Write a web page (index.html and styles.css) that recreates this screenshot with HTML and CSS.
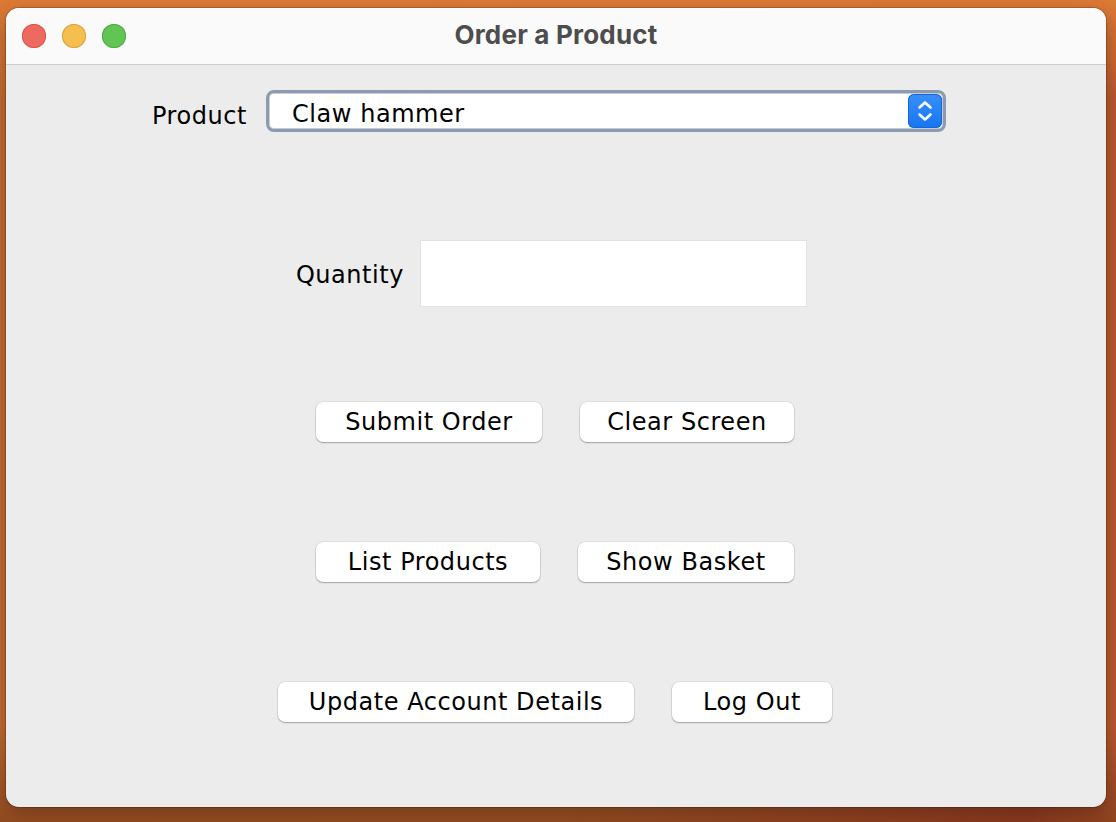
FILE: index.html
```html
<!DOCTYPE html>
<html>
<head>
<meta charset="utf-8">
<title>Order a Product</title>
<link rel="stylesheet" href="styles.css">
</head>
<body>
<div class="desktop">
  <div class="window">
    <div class="titlebar">
      <div class="lights">
        <span class="light red"></span>
        <span class="light yellow"></span>
        <span class="light green"></span>
      </div>
      <div class="title">Order a Product</div>
    </div>
    <div class="content">
      <div class="row row-product">
        <label class="label label-product">Product</label>
        <div class="combo">
          <span class="combo-text">Claw hammer</span>
          <span class="stepper">
            <svg width="20" height="26" viewBox="0 0 20 26">
              <path d="M4.5 9.5 L10 4.5 L15.5 9.5" fill="none" stroke="#fff" stroke-width="2.6" stroke-linecap="round" stroke-linejoin="round"/>
              <path d="M4.5 16.5 L10 21.5 L15.5 16.5" fill="none" stroke="#fff" stroke-width="2.6" stroke-linecap="round" stroke-linejoin="round"/>
            </svg>
          </span>
        </div>
      </div>
      <div class="row row-qty">
        <label class="label label-qty">Quantity</label>
        <div class="field"></div>
      </div>
      <div class="row row-b1">
        <button class="btn w226">Submit Order</button>
        <button class="btn w214">Clear Screen</button>
      </div>
      <div class="row row-b2">
        <button class="btn w224">List Products</button>
        <button class="btn w216">Show Basket</button>
      </div>
      <div class="row row-b3">
        <button class="btn w356">Update Account Details</button>
        <button class="btn w160">Log Out</button>
      </div>
    </div>
  </div>
</div>
</body>
</html>
```
FILE: styles.css
```css
* { box-sizing: border-box; }
html, body { margin: 0; padding: 0; }
body {
  width: 1116px;
  height: 822px;
  overflow: hidden;
  font-family: "DejaVu Sans", "Liberation Sans", sans-serif;
}
.desktop {
  width: 1116px;
  height: 822px;
  padding: 8px 0 0 6px;
  background:
    linear-gradient(180deg, #dc7a36 0%, rgba(220,122,54,0) 12%),
    linear-gradient(180deg, rgba(0,0,0,0) 88%, rgba(110,50,20,0.55) 100%),
    linear-gradient(90deg, #c06a30 0%, #bd6a32 50%, #a8402b 92%, #b85a2e 100%);
}
.window {
  width: 1100px;
  height: 799px;
  border-radius: 13px;
  overflow: hidden;
  background: #ececec;
  box-shadow: 0 0 0 1px rgba(0,0,0,0.18), 0 6px 18px rgba(0,0,0,0.25);
  display: flex;
  flex-direction: column;
}
.titlebar {
  height: 57px;
  flex: none;
  background: #fafafa;
  border-bottom: 1px solid #cfcfcf;
  display: flex;
  align-items: center;
  position: relative;
}
.lights {
  display: flex;
  gap: 16px;
  padding-left: 16px;
  margin-bottom: 1px;
}
.light {
  width: 24px;
  height: 24px;
  border-radius: 50%;
  display: block;
}
.red { background: #ee6a5f; box-shadow: inset 0 0 0 1px #d8564c; }
.yellow { background: #f5bf4f; box-shadow: inset 0 0 0 1px #d9a441; }
.green { background: #61c554; box-shadow: inset 0 0 0 1px #50a944; }
.title {
  position: absolute;
  left: 0;
  right: 0;
  top: 0;
  bottom: 0;
  display: flex;
  align-items: center;
  justify-content: center;
  font-family: Inter, "Liberation Sans", sans-serif;
  font-weight: 700;
  font-size: 26px;
  letter-spacing: 0.2px;
  color: #4d4d4d;
  padding-left: 0;
  padding-bottom: 3px;
}
.content {
  flex: 1;
  display: flex;
  flex-direction: column;
  padding-top: 25px;
  font-size: 24px;
  letter-spacing: 0.55px;
  color: #000;
}
.row {
  display: flex;
  align-items: center;
}
.label {
  text-align: right;
  white-space: nowrap;
}
.row-product { padding-left: 130px; gap: 19px; }
.label-product { width: 111px; padding-top: 9px; }
.combo {
  width: 680px;
  height: 42px;
  border-radius: 8px;
  background: #fff;
  border: 3px solid #8c9bb0;
  display: flex;
  align-items: center;
  justify-content: space-between;
  padding: 0 0 0 23px;
  box-shadow: inset 0 0 0 1px #c4ccd8;
}
.combo-text { padding-top: 5px; }
.stepper {
  width: 34px;
  height: 34px;
  margin-right: 1px;
  border-radius: 6px;
  background: linear-gradient(180deg, #3a8ff8 0%, #1476f5 100%);
  box-shadow: inset 0 0 0 1px #1a66d0;
  display: flex;
  align-items: center;
  justify-content: center;
}
.row-qty { margin-top: 109px; padding-left: 230px; gap: 17px; }
.label-qty { width: 168px; padding-top: 3px; }
.field {
  width: 385px;
  height: 65px;
  background: #fff;
  box-shadow: 0 0 0 1px #e2e2e2, 0 1px 0 #b0b0b0;
}
.btn {
  height: 40px;
  border: none;
  border-radius: 7px;
  background: #fff;
  font-family: inherit;
  font-size: inherit;
  letter-spacing: inherit;
  color: #000;
  padding: 0;
  box-shadow: 0 0 0 0.5px rgba(0,0,0,0.12), 0 1px 1.5px rgba(0,0,0,0.28);
  display: flex;
  align-items: center;
  justify-content: center;
  margin: 0;
}
.row-b1 { margin-top: 96px; padding-left: 310px; gap: 38px; }
.row-b2 { margin-top: 100px; padding-left: 310px; gap: 38px; }
.row-b3 { margin-top: 100px; padding-left: 272px; gap: 38px; }
.w226 { width: 226px; }
.w214 { width: 214px; }
.w224 { width: 224px; }
.w216 { width: 216px; }
.w356 { width: 356px; }
.w160 { width: 160px; }
```
